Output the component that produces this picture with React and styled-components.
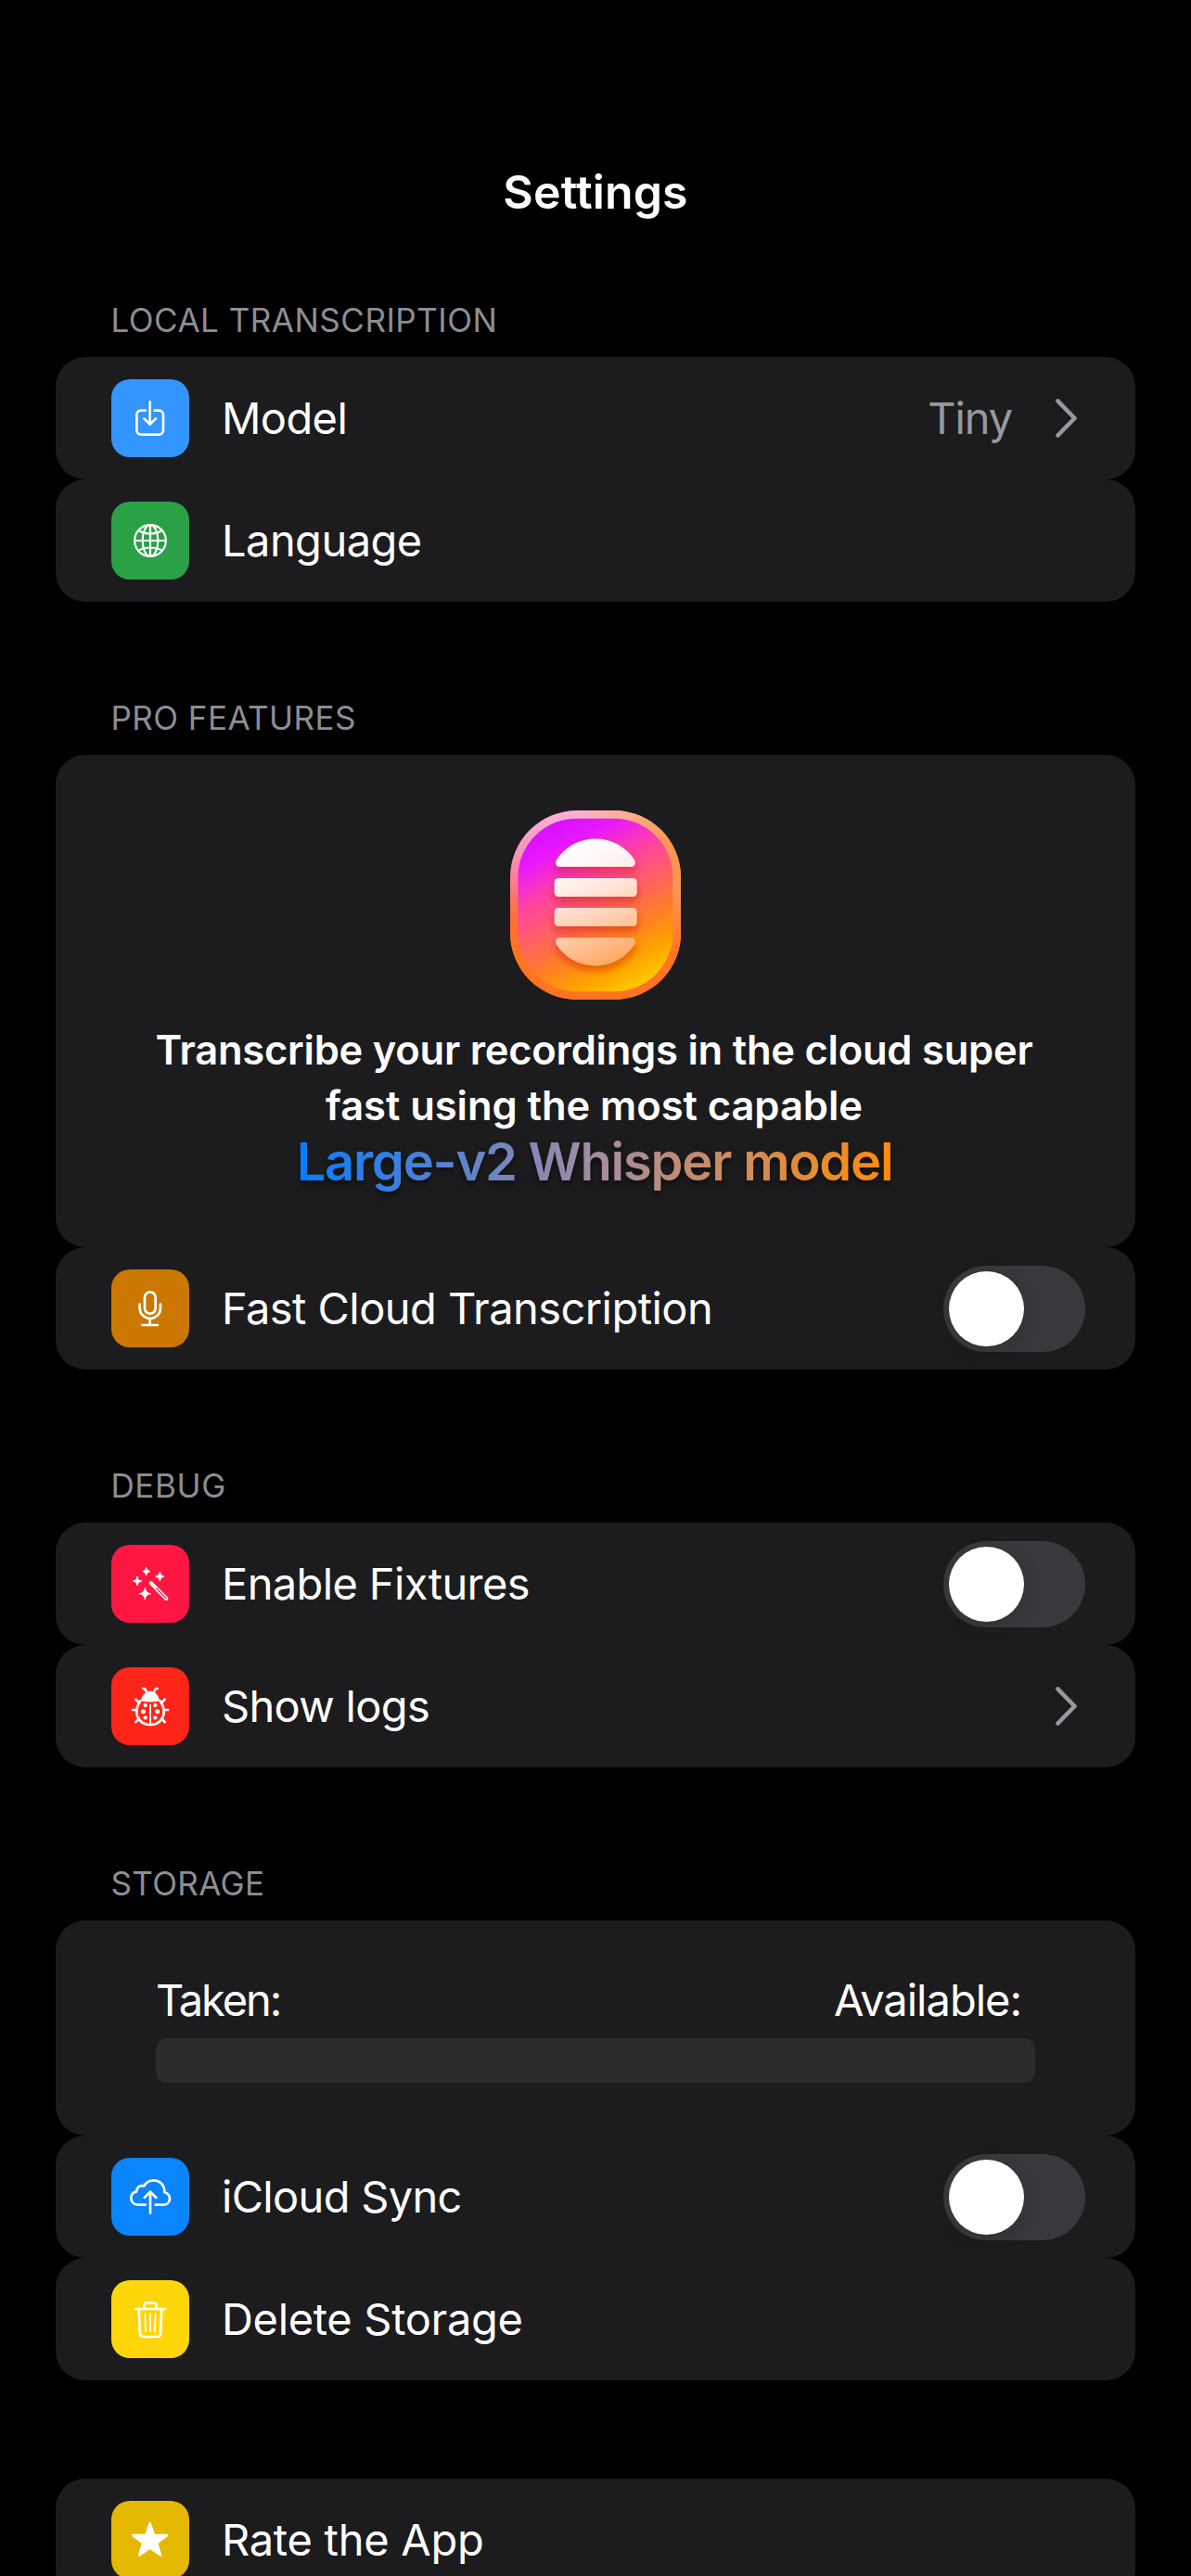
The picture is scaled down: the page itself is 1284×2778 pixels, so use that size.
import React from "react";
import styled, { createGlobalStyle } from "styled-components";

const GlobalStyle = createGlobalStyle`
  body {
    margin: 0;
    background: #000;
  }
  * {
    box-sizing: border-box;
  }
`;

const Page = styled.main`
  display: flex;
  flex-direction: column;
  width: 1284px;
  height: 2778px;
  padding: 0 60px;
  overflow: hidden;
  background: #000;
  color: #fff;
  font-family: Inter, "Liberation Sans", sans-serif;
`;

const NavBar = styled.header`
  flex: none;
  display: flex;
  justify-content: center;
  padding-top: 177px;
  margin-bottom: 86px;
`;

const Title = styled.h1`
  margin: 0;
  font-size: 50px;
  font-weight: 600;
  line-height: 60px;
  letter-spacing: 0.15px;
`;

const Section = styled.section`
  flex: none;
  display: flex;
  flex-direction: column;
  margin-bottom: ${(p) => p.$gap || 103}px;
`;

const SectionTitle = styled.h2`
  margin: 0 0 18px;
  padding-left: 59.5px;
  font-size: 35px;
  font-weight: 400;
  line-height: 44px;
  letter-spacing: ${(p) => p.$tracking}px;
  color: #8d8d93;
`;

const Card = styled.div`
  border-radius: 32px;
  background: #1c1c1e;
`;

const RowCard = styled(Card)`
  display: flex;
  align-items: center;
  gap: 35px;
  height: 132px;
  padding: 0 ${(p) => p.$end || 60}px 0 60px;
`;

const IconTile = styled.span`
  flex: none;
  display: flex;
  width: 84px;
  height: 84px;
  border-radius: 20px;
  background: ${(p) => p.$color};
`;

const Glyph = styled.svg.attrs({ viewBox: "0 0 252 252" })`
  width: 84px;
  height: 84px;
  fill: none;
  stroke: #fff;
  stroke-width: 8;
  stroke-linecap: round;
  stroke-linejoin: round;
`;

const Label = styled.span`
  flex: 1;
  font-size: 47px;
  line-height: 58px;
  white-space: nowrap;
  letter-spacing: ${(p) => p.$tracking}px;
`;

const Value = styled.span`
  font-size: 47px;
  line-height: 58px;
  letter-spacing: -1.1px;
  color: #98989f;
  margin-right: 12px;
`;

const ChevronIcon = styled.svg`
  flex: none;
  width: 24px;
  height: 42px;
  fill: none;
  stroke: #98989f;
  stroke-width: 4.6;
  stroke-linecap: round;
  stroke-linejoin: round;
`;

const SwitchTrack = styled.span`
  flex: none;
  display: flex;
  align-items: center;
  width: 153px;
  height: 93px;
  padding: 6px;
  border-radius: 47px;
  background: #39383d;
`;

const SwitchKnob = styled.span`
  width: 81px;
  height: 81px;
  border-radius: 50%;
  background: #fff;
  box-shadow: 3px 5px 18px rgba(0, 0, 0, 0.12);
`;

const PromoCard = styled(Card)`
  display: flex;
  flex-direction: column;
  align-items: center;
  height: 531px;
  padding-top: 60px;
`;

const Logo = styled.svg`
  flex: none;
  width: 184px;
  height: 204px;
  margin-bottom: 24px;
`;

const PromoLine = styled.span`
  font-size: 43.5px;
  font-weight: 600;
  line-height: 60px;
  white-space: nowrap;
  letter-spacing: ${(p) => p.$tracking}px;
  padding-right: 3px;
`;

const PromoModel = styled.span`
  font-size: 56px;
  font-weight: 600;
  line-height: 62px;
  height: 76px;
  padding-right: 2px;
  white-space: nowrap;
  letter-spacing: -1.21px;
  color: transparent;
  background: linear-gradient(90deg, #067aff, #a48ca2 50%, #ff8c08);
  background-clip: text;
  -webkit-background-clip: text;
  filter: drop-shadow(0 4px 3px rgba(0, 0, 0, 0.55));
`;

const StorageCard = styled(Card)`
  display: flex;
  flex-direction: column;
  gap: 12px;
  height: 232px;
  padding: 57px 108px;
`;

const StorageLegend = styled.div`
  display: flex;
  justify-content: space-between;
  padding-right: 15px;
  font-size: 47px;
  line-height: 58px;
`;

const LegendText = styled.span`
  letter-spacing: ${(p) => p.$tracking}px;
`;

const StorageBar = styled.div`
  height: 48px;
  border-radius: 12px;
  background: #2c2c2e;
`;

const DownloadGlyph = () => (
  <Glyph>
    <path d="M110 101H96a14 14 0 0 0-14 14v50a14 14 0 0 0 14 14h58a14 14 0 0 0 14-14v-50a14 14 0 0 0-14-14h-14M125 73v73M106 127l19 19 19-19" />
  </Glyph>
);

const GlobeGlyph = () => (
  <Glyph>
    <g strokeWidth="6.5">
      <circle cx="126" cy="126" r="50.500" />
      <ellipse cx="126" cy="126" rx="25" ry="50.500" />
      <path d="M126 75v102M75 126h102M88 93c20 14 56 14 76 0M88 159c20-14 56-14 76 0" />
    </g>
  </Glyph>
);

const MicGlyph = () => (
  <Glyph>
    <rect x="108" y="73" width="35" height="70" rx="17.500" />
    <path d="M92 113v12a33.500 33.500 0 0 0 67 0v-12M125 159v21M100 180h50" />
  </Glyph>
);

const Sparkle = ({ x, y, r }) => {
  const k = r * 0.09;
  return (
    <path
      fill="#fff"
      strokeWidth="3"
      d={`M${x} ${y - r}Q${x + k} ${y - k} ${x + r} ${y}Q${x + k} ${y + k} ${x} ${y + r}Q${x - k} ${y + k} ${x - r} ${y}Q${x - k} ${y - k} ${x} ${y - r}Z`}
    />
  );
};

const WandGlyph = () => (
  <Glyph>
    <Sparkle x={113} y={86} r={12} />
    <Sparkle x={84} y={117} r={14} />
    <Sparkle x={157} y={102} r={14} />
    <Sparkle x={109} y={158} r={19} />
    <path d="M128 123l50 51" strokeWidth="12" />
    <path d="M146 141l31 32" strokeWidth="3.5" stroke="#ff1744" />
  </Glyph>
);

const BugGlyph = () => (
  <Glyph>
    <path
      fill="#fff"
      strokeWidth="3"
      d="M98 107c2-14 8-21 15-24 4-6 22-6 26 0 7 3 13 10 15 24-9 5-47 5-56 0Z"
    />
    <path d="M103 69q9 0 11 12M149 69q-9 0-11 12" />
    <path d="M94 109c-9 12-12 22-12 35 0 24 18 42 44 42s44-18 44-42c0-13-3-23-12-35" />
    <path d="M126 122v60" strokeWidth="6" />
    <path d="M79 104l10 10M173 104l-10 10M69 138h12M183 138h-12M79 177l11-11M173 177l-11-11" />
    <g fill="#fff" stroke="none">
      <circle cx="110" cy="123" r="6.500" />
      <circle cx="142" cy="123" r="6.500" />
      <circle cx="103" cy="143" r="7.500" />
      <circle cx="149" cy="143" r="7.500" />
      <circle cx="110" cy="163" r="6.500" />
      <circle cx="142" cy="163" r="6.500" />
    </g>
  </Glyph>
);

const CloudGlyph = () => (
  <Glyph>
    <path d="M110 152H87c-14 0-23-9-23-22 0-11 7-19 18-21 0-14 11-21 24-18 7-12 18-18 31-18 20 0 36 16 35 39 10 3 17 10 17 20 0 12-9 20-20 20h-26M126 179v-69M107 129l19-19 19 19" />
  </Glyph>
);

const TrashGlyph = () => (
  <Glyph>
    <path d="M78 93h96M106 91v-7q0-11 11-11h18q11 0 11 11v7M89 96l4 76q1 11 11 11h44q10 0 11-11l4-76" />
    <path d="M109 109l2 57M126 109v57M143 109l-2 57" strokeWidth="5.5" />
  </Glyph>
);

const StarGlyph = () => (
  <Glyph>
    <path
      fill="#fff"
      d="M125 73l13 38 42 .5-33 24.500 12 39-34-23.500-34 23.500 12-39-33-24.500 42-.5Z"
    />
  </Glyph>
);

const Chevron = () => (
  <ChevronIcon viewBox="0 0 24 42">
    <path d="M2.500 2.500L20.500 21 2.500 39.500" />
  </ChevronIcon>
);

const Switch = () => (
  <SwitchTrack role="switch" aria-checked="false">
    <SwitchKnob />
  </SwitchTrack>
);

const AppLogo = () => (
  <Logo viewBox="0 0 184 204">
    <defs>
      <linearGradient id="rim" x1="0" y1="0" x2="0" y2="1">
        <stop offset="0" stopColor="#fdb0d6" />
        <stop offset="0.2" stopColor="#f898c0" />
        <stop offset="0.42" stopColor="#ff7686" />
        <stop offset="0.65" stopColor="#ff6a34" />
        <stop offset="1" stopColor="#ff7c1c" />
      </linearGradient>
      <linearGradient id="rimWarm" gradientUnits="userSpaceOnUse" x1="90" y1="90" x2="182" y2="66">
        <stop offset="0" stopColor="#ffb488" stopOpacity="0" />
        <stop offset="0.65" stopColor="#ffac7c" stopOpacity="0.85" />
        <stop offset="1" stopColor="#ff944c" />
      </linearGradient>
      <linearGradient id="rimLow" x1="0" y1="0" x2="0" y2="1">
        <stop offset="0.4" stopColor="#ff7420" stopOpacity="0" />
        <stop offset="0.75" stopColor="#ff7420" />
      </linearGradient>
      <linearGradient id="body" gradientUnits="userSpaceOnUse" x1="-12" y1="39.700" x2="81.700" y2="220.700">
        <stop offset="0" stopColor="#d60fff" />
        <stop offset="0.15" stopColor="#e817ff" />
        <stop offset="0.35" stopColor="#ff43a0" />
        <stop offset="0.52" stopColor="#ff6064" />
        <stop offset="0.7" stopColor="#ff8024" />
        <stop offset="0.85" stopColor="#ffa200" />
        <stop offset="0.98" stopColor="#ffc600" />
      </linearGradient>
      <linearGradient id="slats" gradientUnits="userSpaceOnUse" x1="66" y1="34" x2="116" y2="168">
        <stop offset="0" stopColor="#ffffff" />
        <stop offset="0.18" stopColor="#fff8f7" />
        <stop offset="0.4" stopColor="#ffe6dc" />
        <stop offset="0.65" stopColor="#ffceae" />
        <stop offset="1" stopColor="#ffa457" />
      </linearGradient>
      <filter id="slatShadow" x="-20%" y="-20%" width="140%" height="150%">
        <feDropShadow dx="0" dy="5" stdDeviation="4.500" floodColor="#c81400" floodOpacity="0.5" />
      </filter>
    </defs>
    <rect width="184" height="204" rx="72" fill="url(#rim)" />
    <rect width="184" height="204" rx="72" fill="url(#rimWarm)" />
    <rect width="184" height="204" rx="72" fill="url(#rimLow)" />
    <rect x="8.500" y="8.700" width="167" height="186.500" rx="63" fill="url(#body)" />
    <g fill="url(#slats)" filter="url(#slatShadow)">
      <path d="M53.500 60.700C49 60.700 48 56 50.500 52.500A50 50 0 0 1 133.500 52.500C136 56 135 60.700 130.500 60.700Z" />
      <rect x="47.700" y="73" width="89" height="20" rx="4.500" />
      <rect x="47.700" y="105" width="89" height="20" rx="4.500" />
      <path d="M53.500 137.300C49 137.300 48 142 50.500 145.500A50 50 0 0 0 133.500 145.500C136 142 135 137.300 130.500 137.300Z" />
    </g>
  </Logo>
);

const Row = ({ color, glyph, label, tracking, end, children }) => (
  <RowCard $end={end}>
    <IconTile $color={color}>{glyph}</IconTile>
    <Label $tracking={tracking}>{label}</Label>
    {children}
  </RowCard>
);

export default function App() {
  return (
    <>
      <GlobalStyle />
      <Page>
        <NavBar>
          <Title>Settings</Title>
        </NavBar>

        <Section>
          <SectionTitle $tracking={0.5}>LOCAL TRANSCRIPTION</SectionTitle>
          <Row color="#3395ff" glyph={<DownloadGlyph />} label="Model" tracking={-0.6} end={62}>
            <Value>Tiny</Value>
            <Chevron />
          </Row>
          <Row color="#2aa147" glyph={<GlobeGlyph />} label="Language" tracking={-0.54} />
        </Section>

        <Section>
          <SectionTitle $tracking={0.45}>PRO FEATURES</SectionTitle>
          <PromoCard>
            <AppLogo />
            <PromoLine $tracking={-0.24}>Transcribe your recordings in the cloud super</PromoLine>
            <PromoLine $tracking={-0.05}>fast using the most capable</PromoLine>
            <PromoModel>Large-v2 Whisper model</PromoModel>
          </PromoCard>
          <Row color="#cc7700" glyph={<MicGlyph />} label="Fast Cloud Transcription" tracking={-0.56} end={54}>
            <Switch />
          </Row>
        </Section>

        <Section>
          <SectionTitle $tracking={0.6}>DEBUG</SectionTitle>
          <Row color="#ff1744" glyph={<WandGlyph />} label="Enable Fixtures" tracking={-0.62} end={54}>
            <Switch />
          </Row>
          <Row color="#ff2519" glyph={<BugGlyph />} label="Show logs" tracking={-0.67} end={62}>
            <Chevron />
          </Row>
        </Section>

        <Section $gap={106}>
          <SectionTitle $tracking={0.36}>STORAGE</SectionTitle>
          <StorageCard>
            <StorageLegend>
              <LegendText $tracking={-2.1}>Taken:</LegendText>
              <LegendText $tracking={-1}>Available:</LegendText>
            </StorageLegend>
            <StorageBar />
          </StorageCard>
          <Row color="#0a84ff" glyph={<CloudGlyph />} label="iCloud Sync" tracking={-0.68} end={54}>
            <Switch />
          </Row>
          <Row color="#ffd60a" glyph={<TrashGlyph />} label="Delete Storage" tracking={-0.33} />
        </Section>

        <Section>
          <Row color="#e5b800" glyph={<StarGlyph />} label="Rate the App" tracking={-0.27} />
        </Section>
      </Page>
    </>
  );
}
